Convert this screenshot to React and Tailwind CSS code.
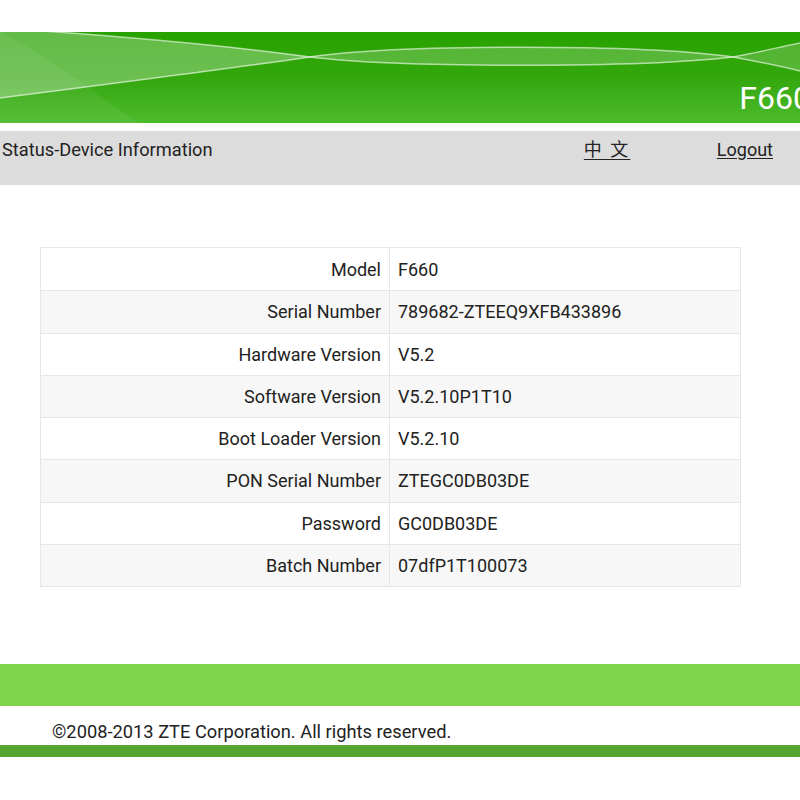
import React from 'react';

const rows = [
    ['Model', 'F660'],
    ['Serial Number', '789682-ZTEEQ9XFB433896'],
    ['Hardware Version', 'V5.2'],
    ['Software Version', 'V5.2.10P1T10'],
    ['Boot Loader Version', 'V5.2.10'],
    ['PON Serial Number', 'ZTEGC0DB03DE'],
    ['Password', 'GC0DB03DE'],
    ['Batch Number', '07dfP1T100073'],
];

const Banner = () => (
    <div className="relative h-[91px] overflow-hidden bg-gradient-to-b from-[#27a200] via-[#33a70c] to-[#4dbb2b]">
        <svg className="absolute inset-0" width="800" height="91" viewBox="0 0 800 91" preserveAspectRatio="none">
            {/* left wedge */}
            <path d="M0 -4 C120 4 230 14 310 25 C220 38 110 52 0 66 Z" fill="#ffffff" opacity="0.28" />
            {/* middle lens */}
            <path d="M310 25 C400 12 640 12 733 25 C640 36 400 36 310 25 Z" fill="#ffffff" opacity="0.2" />
            {/* right wedge */}
            <path d="M733 25 C760 20 780 15 800 11 L800 39 C780 34 760 30 733 25 Z" fill="#ffffff" opacity="0.18" />
            <path d="M0 -4 C120 4 230 14 310 25 C400 36 640 36 733 25 C760 20 780 15 800 11" stroke="#ffffff" strokeOpacity="0.6" strokeWidth="1.5" fill="none" />
            <path d="M0 66 C110 52 220 38 310 25 C400 12 640 12 733 25 C760 30 780 34 800 39" stroke="#ffffff" strokeOpacity="0.6" strokeWidth="1.5" fill="none" />
            <path d="M0 0 L0 91 L140 91 C90 60 60 30 0 0 Z" fill="#ffffff" opacity="0.06" />
        </svg>
        <div className="absolute right-[-11px] top-[50px] text-[32px] leading-none text-white">F660</div>
    </div>
);

export default function App() {
    return (
        <div className="w-[800px] bg-white text-[#222]" style={{ fontFamily: 'Roboto, "Noto Sans CJK SC", sans-serif' }}>
            <div className="h-[32px]" />
            <Banner />
            <div className="h-[8px]" />
            <div className="flex h-[54px] items-start bg-[#dcdcdc] pt-[7px] text-[18px] leading-[24px]">
                <div className="pl-[2px] text-[18.25px]">Status-Device Information</div>
                <div className="ml-auto w-[133px]"><span className="underline underline-offset-3 tracking-[2px]">中&nbsp;文</span></div>
                <div className="mr-[27px] underline underline-offset-2">Logout</div>
            </div>
            <div className="h-[62px]" />
            <div className="ml-[40px] w-[701px] border border-[#e6e6e6]">
                {rows.map(([label, value], i) => (
                    <div key={label} className={`flex h-[42.25px] items-center text-[18px] ${i > 0 ? 'border-t border-[#e6e6e6]' : ''} ${i % 2 === 1 ? 'bg-[#f7f7f7]' : 'bg-white'}`}>
                        <div className="w-[349px] self-stretch flex items-center justify-end border-r border-[#e6e6e6] pr-[8px]">{label}</div>
                        <div className="pl-[8px]">{value}</div>
                    </div>
                ))}
            </div>
            <div className="h-[77px]" />
            <div className="h-[42px] bg-[#80d44c]" />
            <div className="flex h-[39px] items-center pl-[52px] pt-[12px] text-[18.3px]">©2008-2013 ZTE Corporation. All rights reserved.</div>
            <div className="h-[12px] bg-[#56a52e]" />
            <div className="h-[44px]" />
        </div>
    );
}
